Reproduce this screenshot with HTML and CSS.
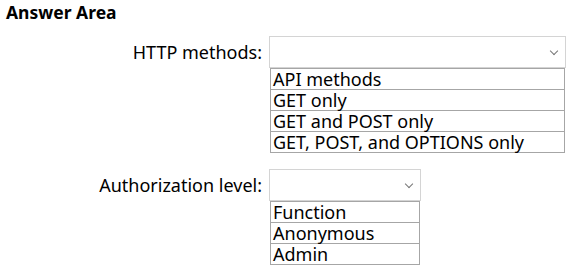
FILE: index.html
```html
<!DOCTYPE html>
<html lang="en">
<head>
  <meta charset="UTF-8" />
  <title>Answer Area</title>
  <link rel="stylesheet" href="styles.css">
</head>
<body>
  <h1 class="title">Answer Area</h1>

  <div class="answer">
    <div class="label">HTTP methods:</div>
    <div class="field">
      <div class="select wide"><span class="chev"></span></div>
      <ul class="options wide">
        <li>API methods</li>
        <li>GET only</li>
        <li>GET and POST only</li>
        <li>GET, POST, and OPTIONS only</li>
      </ul>
    </div>

    <div class="label">Authorization level:</div>
    <div class="field">
      <div class="select narrow"><span class="chev"></span></div>
      <ul class="options narrow">
        <li>Function</li>
        <li>Anonymous</li>
        <li>Admin</li>
      </ul>
    </div>
  </div>
</body>
</html>
```

FILE: styles.css
```css
html, body {
  margin: 0;
  padding: 0;
  background: #fff;
  color: #000;
  font-family: "Segoe UI", "Noto Sans", "Open Sans", sans-serif;
}

body {
  padding: 0 0 0 6px;
}

.title {
  margin: 0;
  padding-top: 1px;
  font-size: 17.5px;
  font-weight: bold;
  line-height: 22px;
}

.answer {
  display: grid;
  grid-template-columns: 256px auto;
  column-gap: 7px;
  row-gap: 16px;
  margin-top: 13px;
}

.label {
  text-align: right;
  font-size: 18px;
  line-height: 32px;
}

.field {
  display: flex;
  flex-direction: column;
}

.select {
  height: 30px;
  border: 1px solid #d4d4d4;
  display: flex;
  align-items: center;
  justify-content: flex-end;
  padding-right: 8px;
}

.chev {
  width: 5px;
  height: 5px;
  border-right: 1.5px solid #777;
  border-bottom: 1.5px solid #777;
  transform: rotate(45deg);
  margin-top: -2px;
}

.wide { width: 295px; }
.narrow { width: 150px; }
.select.wide { width: 287px; }
.select.narrow { width: 142px; }

.options {
  list-style: none;
  margin: 0;
  padding: 0;
  margin-left: 1px;
  border: 1px solid #a6a6a6;
  box-sizing: border-box;
}

.options li {
  font-size: 18px;
  line-height: 20px;
  padding-left: 2px;
  border-top: 1px solid #a6a6a6;
  white-space: nowrap;
}

.options li:first-child {
  border-top: none;
}
```
